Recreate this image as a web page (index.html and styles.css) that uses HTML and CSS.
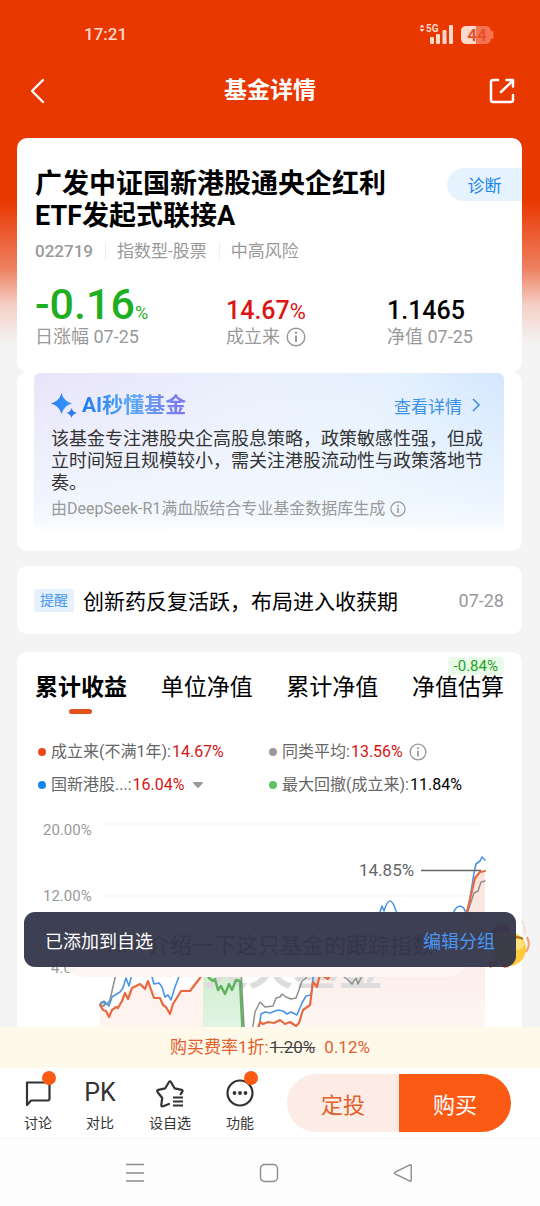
FILE: index.html
```html
<!DOCTYPE html>
<html lang="zh-CN">
<head>
<meta charset="utf-8">
<meta name="viewport" content="width=device-width, initial-scale=1">
<title>基金详情</title>
<link rel="stylesheet" href="styles.css">
</head>
<body>
<div class="app">
  <div class="screen">
    <div class="status-bar">
      <span class="clock">17:21</span>
      <svg class="status-icons" width="76" height="24" viewBox="0 0 76 24" aria-label="信号与电量">
        <g fill="#ffd9cc">
          <path d="M3 2.500l2.500 3h-5zM3 10l2.500-3h-5z"/>
          <text x="7" y="10" class="net">5G</text>
          <rect x="11" y="15" width="4" height="7" rx="1"/>
          <rect x="17" y="12" width="4" height="10" rx="1"/>
          <rect x="23.500" y="8" width="4" height="14" rx="1"/>
          <rect x="30" y="3" width="4" height="19" rx="1"/>
        </g>
        <rect x="42" y="4" width="30" height="18" rx="5" fill="#f67451"/>
        <rect x="72" y="9" width="2.500" height="8" rx="1" fill="#f67451"/>
        <path d="M47 4h10v18H47a5 5 0 0 1-5-5V9a5 5 0 0 1 5-5z" fill="#ffd9cc"/>
        <text x="58" y="19" class="battery" text-anchor="middle">44</text>
      </svg>
    </div>
    <header class="nav">
      <button class="icon-button" aria-label="返回">
        <svg width="28" height="28" viewBox="0 0 28 28"><path d="M19 3L8 14l11 11" fill="none" stroke="#fff" stroke-width="2.400" stroke-linecap="round" stroke-linejoin="round"/></svg>
      </button>
      <h1>基金详情</h1>
      <button class="icon-button" aria-label="分享">
        <svg width="28" height="28" viewBox="0 0 28 28" fill="none" stroke="#fff" stroke-width="2.500" stroke-linecap="round" stroke-linejoin="round"><path d="M10 3H5a2 2 0 0 0-2 2v18a2 2 0 0 0 2 2h18a2 2 0 0 0 2-2v-5M13 15L25 3.500M18.500 3H25v6.500"/></svg>
      </button>
    </header>

    <main class="cards">
      <section class="card summary">
        <div class="summary-head">
          <h2>广发中证国新港股通央企红利<br>ETF发起式联接A</h2>
          <button class="diagnose">诊断</button>
        </div>
        <div class="meta"><span class="code">022719</span><span>指数型-股票</span><span>中高风险</span></div>
        <div class="stats">
          <div><div class="value fall">-0.16<small>%</small></div><div class="label">日涨幅 07-25</div></div>
          <div><div class="value rise"><span>14.67<em>%</em></span></div><div class="label">成立来
            <svg width="20" height="20" viewBox="0 0 20 20"><use href="#info"/></svg></div></div>
          <div><div class="value"><span>1.1465</span></div><div class="label">净值 07-25</div></div>
        </div>
      </section>

      <section class="card ai">
        <div class="ai-panel">
          <div class="ai-head">
            <svg width="27" height="27" viewBox="0 0 27 27">
              <defs><linearGradient id="spark" x1="0" x2="1"><stop offset="0" stop-color="#2a7df0"/><stop offset="1" stop-color="#3b9bff"/></linearGradient></defs>
              <path d="M10.500 1Q12.500 9 21 11.500Q12.500 14 10.500 22Q8.500 14 0 11.500Q8.500 9 10.500 1z" fill="url(#spark)"/>
              <path d="M20.500 16Q21.500 20 26 21Q21.500 22 20.500 26Q19.500 22 15.500 21Q19.500 20 20.500 16z" fill="#2f7eea"/>
            </svg>
            <h3>AI秒懂基金</h3>
            <a href="#detail">查看详情
              <svg width="10" height="14" viewBox="0 0 10 14"><path d="M2 1l6 6-6 6" fill="none" stroke="#3c8fe8" stroke-width="1.600"/></svg></a>
          </div>
          <p class="ai-text">该基金专注港股央企高股息策略，政策敏感性强，但成立时间短且规模较小，需关注港股流动性与政策落地节奏。</p>
          <p class="ai-source">由DeepSeek-R1满血版结合专业基金数据库生成
            <svg width="16" height="16" viewBox="0 0 20 20"><use href="#info"/></svg></p>
        </div>
      </section>

      <section class="card notice">
        <span class="tag">提醒</span>
        <a href="#notice">创新药反复活跃，布局进入收获期</a>
        <time>07-28</time>
      </section>

      <section class="card performance">
        <div class="tabs" role="tablist">
          <button role="tab" class="active" aria-selected="true">累计收益</button>
          <button role="tab">单位净值</button>
          <button role="tab">累计净值</button>
          <button role="tab">净值估算<span class="estimate">-0.84%</span></button>
        </div>
        <div class="legend">
          <div><i class="dot orange"></i>成立来(不满1年):<b>14.67%</b></div>
          <div><i class="dot gray"></i>同类平均:<b>13.56%</b>
            <svg width="18" height="18" viewBox="0 0 20 20"><use href="#info"/></svg></div>
          <div><i class="dot blue"></i>国新港股...:<b>16.04%</b>
            <svg class="caret" width="10" height="6" viewBox="0 0 10 6"><path d="M1 0h8a1 1 0 0 1 .6 1.500L5.800 5.500a1 1 0 0 1-1.600 0L.4 1.500A1 1 0 0 1 1 0z" fill="#999"/></svg></div>
          <div><i class="dot green"></i>最大回撤(成立来):<b class="plain">11.84%</b></div>
        </div>
        <svg class="chart" viewBox="17 810 505 230" role="img" aria-label="累计收益走势图">
          <defs>
            <linearGradient id="warm" x1="0" y1="0" x2="0" y2="1"><stop offset="0" stop-color="#fbe3dc"/><stop offset="1" stop-color="#fef7f5"/></linearGradient>
            <linearGradient id="drop" x1="0" y1="0" x2="0" y2="1"><stop offset="0" stop-color="#cdeccd"/><stop offset="1" stop-color="#e4f6e6"/></linearGradient>
          </defs>
          <path d="M100 824H485M100 896H485M100 968H485" stroke="#f5f5f5"/>
          <text x="43" y="835" class="axis">20.00%</text>
          <text x="43" y="901" class="axis">12.00%</text>
          <text x="51" y="973" class="axis">4.00%</text>
          <path d="M100 1040V1005L109 1017L125 993L148 981L160 998L170 1014L181 991L200 978L203 970V1040z" fill="#fff3f0"/>
          <path d="M203 960H241L243 1040H203z" fill="url(#drop)"/>
          <path d="M258 1040V1022L299 1023L310 1005L320 978L380 940L468 911L475 878L480 872L485 871V1040z" fill="url(#warm)"/>
          <text x="203" y="985" class="watermark">天天基金</text>
          <g fill="none" stroke-linejoin="round" stroke-linecap="round">
            <g stroke="#8f8f8f" stroke-width="1.500">
              <circle cx="102.500" cy="1004" r="2"/>
              <path d="M103 1006L108 1003L110 1000L115 978L118 965"/>
              <path d="M241 970L244 1027M251 1040L255 1012L260 1002L265 1007L273 1006L276 998L280 997L282 994L286 997L291 999L296 998L299 990L302 981L306 978L312 965"/>
              <path d="M340 974L347 979L352 984L356 978L358 984L362 976"/>
              <path d="M468 911L474 893L478 891L481 882L485 881"/>
            </g>
            <g stroke="#4a95e6" stroke-width="1.600">
              <path d="M100 1005L104 1001L109 1006L112 997L120 992L123 988L126 978L129 986L133 970L150 970L154 984L159 983L162 987L165 997L168 995L171 1000L175 987L180 974"/>
              <path d="M258 1035L261 1014L265 1012L270 1013L278 1010L283 1011L287 1014L291 1012L297 1015L302 1003L306 996L311 995L313 978L316 960"/>
              <path d="M378 918L382 906L384 911Q387 901 390 901Q393 901 396 911L400 920"/>
              <path d="M452 918Q454 907 460 906Q464 907 465 911L468 911L474 873L476 864L480 861L482 857L485 860"/>
            </g>
            <g stroke="#e76a40" stroke-width="2.200">
              <path d="M100 1005L103 1010L106 1011L109 1017L112 1010L116 1007L118 1008L122 1001L125 993L128 999L132 988L140 984L145 989L148 981L154 998L160 998L163 1005L166 1007L170 1014L173 1004L178 996L181 991L190 991L200 978L205 970"/>
              <path d="M258 1028L260 1022L263 1024L268 1022L274 1023L280 1020L285 1024L290 1022L296 1026L299 1023L303 1010L310 1005L313 982L317 987L320 974L328 979L335 968"/>
              <path d="M466 916L475 878L480 872L485 871"/>
            </g>
            <path d="M206 970L209 978L213 981L215 979L218 990L221 986L225 994L229 984L232 990L236 980L240 981L243 1040" stroke="#5fb35f" stroke-width="2.400"/>
          </g>
          <path d="M421 870.500H481" stroke="#666" stroke-width="1.400"/>
          <text x="359" y="876" class="peak">14.85%</text>
        </svg>
      </section>
    </main>

    <div class="bubble">Hi~ 介绍一下这只基金的跟踪指数</div>
    <svg class="mascot" width="50" height="56" viewBox="0 0 50 56">
      <path d="M6 24Q2 8 14 5Q24 2 26 18z" fill="#b24a32"/>
      <path d="M36 2Q39 8 39 16" fill="none" stroke="#f6dcdc" stroke-width="2"/>
      <path d="M41 18Q45 26 40 33" fill="none" stroke="#f4a070" stroke-width="2"/>
      <circle cx="23" cy="30" r="17" fill="#ffcb3d"/>
      <ellipse cx="31" cy="25" rx="7" ry="6" fill="#ffe27a"/>
      <path d="M27 19Q33 17 37 20" fill="none" stroke="#a96a18" stroke-width="2"/>
      <path d="M1 43l10-2 2 4-9 4zM14 43l8-1 1 6-5 1z" fill="#ff7128"/>
    </svg>
    <div class="toast" role="status"><span>已添加到自选</span><a href="#group">编辑分组</a></div>
  </div>

  <div class="fee">购买费率1折:<s>1.20%</s><span>0.12%</span></div>
  <nav class="dock">
    <div class="tools">
      <button class="dotted">
        <svg width="30" height="30" viewBox="0 0 30 30" fill="none" stroke="#333" stroke-width="2.200" stroke-linejoin="round"><path d="M4 4.500h21a1.500 1.500 0 0 1 1.500 1.500v15a1.500 1.500 0 0 1-1.500 1.500H8L4 27z"/></svg>
        讨论</button>
      <button><span class="pk">PK</span>对比</button>
      <button>
        <svg width="30" height="30" viewBox="0 0 30 30" fill="none" stroke="#333" stroke-width="2.200" stroke-linejoin="round" stroke-linecap="round"><path d="M14 26l-6.500 2.500q-1.300 0-1.200-1.500l.9-7L2.500 14q-1-1.500.8-2.200l7-1.500L14 4q1-1.500 2 0l3.500 6.300 7.200 1.500q1.500.7.5 2.200l-1.500 2"/><path d="M18 19.500h10M18 23.500h10M18 27.500h10" stroke-linecap="butt"/></svg>
        设自选</button>
      <button class="dotted">
        <svg width="30" height="30" viewBox="0 0 30 30"><circle cx="15" cy="15" r="12.500" fill="none" stroke="#333" stroke-width="2.200"/><g fill="#333"><circle cx="9.500" cy="15" r="1.900"/><circle cx="15" cy="15" r="1.900"/><circle cx="20.500" cy="15" r="1.900"/></g></svg>
        功能</button>
    </div>
    <div class="trade"><button class="plan">定投</button><button class="buy">购买</button></div>
  </nav>
  <div class="system-nav">
    <button aria-label="最近任务"><svg width="20" height="20" viewBox="0 0 20 20"><path d="M1 1.500h18M1 10h18M1 18h18" stroke="#8c8c8c" stroke-width="1.500"/></svg></button>
    <button aria-label="主屏幕"><svg width="20" height="20" viewBox="0 0 20 20"><rect x="1.500" y="1.500" width="17" height="17" rx="4" fill="none" stroke="#8c8c8c" stroke-width="1.400"/></svg></button>
    <button aria-label="后退"><svg width="20" height="20" viewBox="0 0 20 20"><path d="M17 1.800L2 9.200q-1 .8 0 1.600L17 18.200q1.200.3 1.200-1V2.800q0-1.300-1.200-1z" fill="none" stroke="#8c8c8c" stroke-width="1.400"/></svg></button>
  </div>
</div>
<svg class="symbols" aria-hidden="true">
  <symbol id="info" viewBox="0 0 20 20"><circle cx="10" cy="10" r="8.800" fill="none" stroke="#999" stroke-width="1.500"/><circle cx="10" cy="5.800" r="1.200" fill="#999"/><path d="M10 8.500v6.500" stroke="#999" stroke-width="2"/></symbol>
</svg>
</body>
</html>
```

FILE: styles.css
```css
* { box-sizing: border-box; }

body {
  margin: 0;
  font-family: Roboto, "Noto Sans CJK SC", sans-serif;
  color: #000;
  background: #fdfdfd;
}

h1, h2, h3, p { margin: 0; }
a { text-decoration: none; color: inherit; }
i, em { font-style: normal; }

button {
  border: 0;
  padding: 0;
  background: none;
  font: inherit;
  color: inherit;
}

.symbols { position: absolute; width: 0; height: 0; }

.app {
  height: 100vh;
  display: flex;
  flex-direction: column;
}

.screen {
  position: relative;
  flex: 1;
  min-height: 0;
  overflow: hidden;
  background: linear-gradient(#e93700 0, #e93700 200px, #ee8060 268px, #f4d0c6 305px, #f4f4f4 345px);
}

/* Top bars */
.status-bar {
  display: flex;
  align-items: center;
  justify-content: space-between;
  height: 60px;
  padding: 8px 45px 0 84px;
}
.clock { font-size: 17px; font-weight: 500; color: #ffd9cc; }
.net { font-size: 10px; font-weight: 700; }
.battery { font-size: 17px; font-weight: 700; fill: #e5512a; }

.nav {
  display: flex;
  align-items: center;
  justify-content: space-between;
  height: 62px;
  padding: 0 24px;
  color: #fff;
}
.nav h1 { font-size: 23px; line-height: 32px; font-weight: 700; }
.icon-button { display: flex; }

/* Cards */
.cards {
  display: flex;
  flex-direction: column;
  padding: 16px 18px 0 17px;
}
.card { background: #fff; border-radius: 10px; }

.summary { padding: 30px 0 25px 18px; }
.summary-head {
  display: flex;
  align-items: flex-start;
  justify-content: space-between;
}
.summary h2 { font-size: 27px; line-height: 32px; font-weight: 700; }
.diagnose {
  width: 75px;
  height: 33px;
  border-radius: 17px 0 0 17px;
  background: #e6f3fe;
  color: #1887ee;
  font-size: 17px;
}

.meta {
  display: flex;
  align-items: center;
  margin-top: 7px;
  font-size: 17px;
  line-height: 24px;
  color: #999;
}
.meta .code { font-weight: 500; }
.meta span + span {
  margin-left: 12px;
  padding-left: 11px;
  line-height: 18px;
  border-left: 1px solid #eee;
}

.stats {
  display: grid;
  grid-template-columns: 191fr 161fr 135fr;
  margin-top: 18px;
}
.value {
  height: 46px;
  font-size: 43px;
  line-height: 46px;
  font-weight: 500;
  white-space: nowrap;
}
.value span { font-size: 25px; line-height: 1; }
.value small { font-size: 18px; line-height: 1; font-weight: 400; }
.value em { font-size: 22px; line-height: 1; font-weight: 400; }
.fall { color: #1fae1f; }
.rise { color: #dc1414; }
.label {
  display: flex;
  align-items: center;
  gap: 6px;
  height: 20px;
  font-size: 18px;
  line-height: 20px;
  color: #999;
}

.ai { padding: 1px 18px 18px 17px; }
.ai-panel {
  padding: 17px 9px 14px 17px;
  border-radius: 6px;
  background:
    linear-gradient(rgba(255, 255, 255, 0) 0%, rgba(243, 249, 255, .8) 80%, rgba(247, 251, 255, .9) 92%, #fff 100%),
    linear-gradient(100deg, #e9e4f9 0%, #eaf0fd 45%, #e6f1fe 70%, #cfe5fe 100%);
}
.ai-head { display: flex; align-items: center; height: 30px; }
.ai-head h3 {
  margin-left: 4px;
  font-size: 21px;
  line-height: 30px;
  font-weight: 700;
  color: transparent;
  background: linear-gradient(90deg, #1e7df0, #58a8f5 50%, #8273ee);
  background-clip: text;
  -webkit-background-clip: text;
}
.ai-head a {
  display: flex;
  align-items: center;
  gap: 9px;
  margin-left: auto;
  padding-right: 14px;
  font-size: 17px;
  color: #3c8fe8;
}
.ai-text { margin-top: 8px; font-size: 18px; line-height: 22px; color: #333; }
.ai-source {
  display: flex;
  align-items: center;
  gap: 5px;
  margin-top: 4px;
  font-size: 16px;
  line-height: 21px;
  color: #999;
}

.notice {
  display: flex;
  align-items: center;
  height: 68px;
  margin-top: 15px;
  padding: 0 18px 0 17px;
}
.tag {
  padding: 0 6px;
  border-radius: 3px;
  background: #e6f1fe;
  color: #4a97ea;
  font-size: 14px;
  line-height: 23px;
}
.notice a { margin-left: 9px; font-size: 21px; }
.notice time { margin-left: auto; font-size: 18px; color: #999; }

/* Performance */
.performance { margin-top: 18px; padding-top: 20px; }
.tabs {
  display: flex;
  justify-content: space-between;
  padding: 0 18px;
}
.tabs button { position: relative; font-size: 23px; line-height: 32px; }
.tabs .active { font-weight: 700; }
.tabs .active::after {
  content: "";
  position: absolute;
  left: 50%;
  bottom: -10px;
  width: 23px;
  height: 5px;
  margin-left: -12px;
  border-radius: 3px;
  background: #e2501c;
}
.estimate {
  position: absolute;
  right: 0;
  top: -15px;
  padding: 0 6px;
  border-radius: 4px;
  background: #e9fbe8;
  color: #20a420;
  font-size: 15px;
  line-height: 18px;
}

.legend {
  display: grid;
  grid-template-columns: 1fr 1fr;
  padding: 0 22px 0 21px;
  margin-top: 31px;
  font-size: 16px;
  line-height: 33px;
  color: #666;
}
.legend div { display: flex; align-items: center; white-space: nowrap; }
.legend b { margin-left: 1px; font-weight: 400; color: #d41616; }
.legend .plain { color: #000; }
.legend svg { margin-left: 6px; }
.legend .caret { margin-left: 9px; }
.dot { width: 8px; height: 8px; margin-right: 5px; border-radius: 50%; }
.orange { background: #ec4a12; }
.gray { background: #999; }
.blue { background: #1784ee; }
.green { background: #5ec162; }

.chart { display: block; width: 100%; margin-top: 9px; }
.axis { font-size: 15px; fill: #999; }
.peak { font-size: 17px; fill: #666; }
.watermark { font-size: 45px; font-weight: 700; fill: #ddd; }

/* Layers over the page */
.bubble {
  position: absolute;
  left: 63px;
  right: 73px;
  bottom: 50px;
  padding-right: 33px;
  border-radius: 20px;
  background: #fef6f4;
  color: #222;
  font-size: 22px;
  line-height: 62px;
  text-align: right;
  white-space: nowrap;
}
.mascot { position: absolute; right: 4px; bottom: 52px; }
.toast {
  position: absolute;
  left: 24px;
  right: 24px;
  bottom: 60px;
  display: flex;
  align-items: center;
  justify-content: space-between;
  height: 55px;
  padding: 0 21px;
  border-radius: 11px;
  background: rgba(53, 55, 75, .96);
  color: #fff;
  font-size: 18px;
}
.toast a { color: #4a96f2; }

/* Bottom bars */
.fee {
  display: flex;
  justify-content: center;
  background: #fff9ea;
  color: #e2602c;
  font-size: 17px;
  line-height: 41px;
}
.fee s { color: #444; margin-left: 1px; }
.fee span { margin-left: 9px; }

.dock {
  display: flex;
  align-items: center;
  height: 71px;
  padding: 0 29px 0 7px;
  background: #fff;
  border-bottom: 1px solid #f5f5f5;
}
.tools { flex: 1; display: flex; padding: 5px 16px 0 0; }
.tools button {
  position: relative;
  flex: 1 1 62px;
  display: flex;
  flex-direction: column;
  align-items: center;
  font-size: 14px;
  line-height: 20px;
  gap: 5px;
  color: #333;
}
.tools button:nth-child(3) { flex-basis: 78px; }
.tools .dotted::after {
  content: "";
  position: absolute;
  left: 50%;
  top: -7px;
  width: 14px;
  height: 14px;
  margin-left: 4px;
  border-radius: 50%;
  background: #fb5a14;
}
.pk { font-size: 25px; line-height: 30px; }
.trade { display: flex; flex: none; }
.trade button { width: 112px; height: 58px; font-size: 22px; }
.plan { border-radius: 29px 0 0 29px; background: #fdece5; color: #e2602c; }
.buy { border-radius: 0 29px 29px 0; background: #fb5a14; color: #fff; }

.system-nav {
  display: flex;
  align-items: center;
  justify-content: center;
  gap: 114px;
  height: 67px;
  padding-right: 2px;
  background: #fdfdfd;
}
.system-nav button { display: flex; }
```
